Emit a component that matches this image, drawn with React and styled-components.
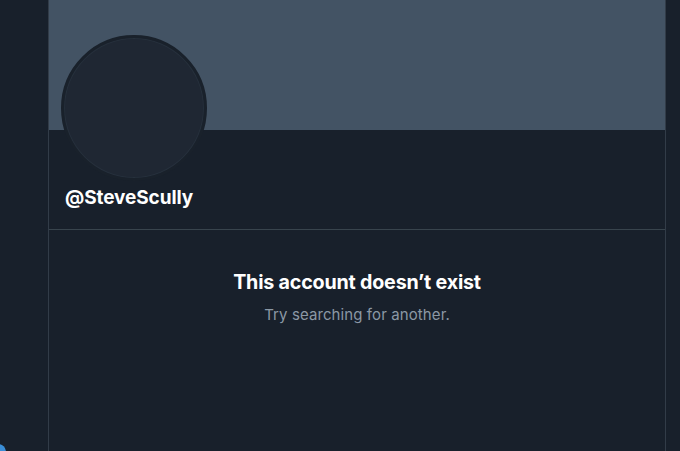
import React from "react"
import styled, { createGlobalStyle } from "styled-components"

const GlobalStyle = createGlobalStyle`
  html, body {
    margin: 0;
    padding: 0;
    background: #18202b;
    font-family: Inter, "Noto Sans", "Liberation Sans", sans-serif;
    color: #ffffff;
    overflow: hidden;
  }
`

const Page = styled.div`
  position: relative;
  display: flex;
  width: 680px;
  height: 451px;
  background: #18202b;
  overflow: hidden;
`

const Sidebar = styled.div`
  width: 48px;
  flex-shrink: 0;
`

const Main = styled.main`
  width: 616px;
  border-left: 1px solid #323c48;
  border-right: 1px solid #323c48;
  display: flex;
  flex-direction: column;
`

const Banner = styled.div`
  height: 130px;
  background: #435364;
`

const Header = styled.div`
  padding: 0 12px;
  border-bottom: 1px solid #38444d;
  height: 99px;
`

const Avatar = styled.div`
  width: 140px;
  height: 140px;
  margin-top: -95px;
  border-radius: 50%;
  border: 3px solid #19212b;
  background: #1f2733;
  box-shadow: inset 0 0 0 1px #26303c;
`

const Handle = styled.div`
  margin: 5px 0 0 4px;
  font-size: 19px;
  font-weight: 700;
  letter-spacing: -0.1px;
  line-height: 24px;
`

const Empty = styled.div`
  display: flex;
  flex-direction: column;
  align-items: center;
  padding-top: 39px;
`

const Title = styled.h2`
  margin: 0;
  font-size: 19.7px;
  font-weight: 700;
  line-height: 26px;
  letter-spacing: -0.2px;
`

const Sub = styled.p`
  margin: 10px 0 0;
  font-size: 15px;
  line-height: 20px;
  letter-spacing: 0.1px;
  color: #8b98a5;
`

const Corner = styled.div`
  position: absolute;
  left: -10px;
  top: 444px;
  width: 16px;
  height: 16px;
  border-radius: 50%;
  background: #3a8dd6;
`

export default function App() {
  return (
    <>
      <GlobalStyle />
      <Page>
        <Sidebar />
        <Main>
          <Banner />
          <Header>
            <Avatar />
            <Handle>@SteveScully</Handle>
          </Header>
          <Empty>
            <Title>This account doesn’t exist</Title>
            <Sub>Try searching for another.</Sub>
          </Empty>
        </Main>
        <Corner />
      </Page>
    </>
  )
}
